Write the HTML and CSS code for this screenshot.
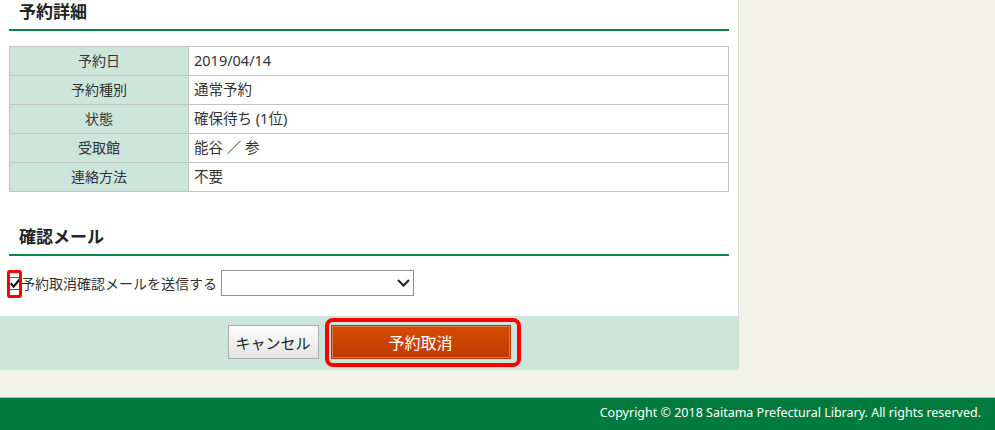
FILE: index.html
```html
<!DOCTYPE html>
<html lang="ja">
<head>
<meta charset="utf-8">
<title>予約詳細</title>
<link rel="stylesheet" href="styles.css">
</head>
<body>
<div class="main">
  <section class="sec">
    <h2 class="sec-title">予約詳細</h2>
    <table class="detail">
      <tr><th>予約日</th><td>2019/04/14</td></tr>
      <tr><th>予約種別</th><td>通常予約</td></tr>
      <tr><th>状態</th><td>確保待ち (1位)</td></tr>
      <tr><th>受取館</th><td>能谷 ／ 参</td></tr>
      <tr><th>連絡方法</th><td>不要</td></tr>
    </table>
  </section>
  <section class="sec sec-mail">
    <h2 class="sec-title">確認メール</h2>
    <div class="mail-row">
      <span class="check mark">
        <svg width="12" height="13" viewBox="0 0 12 13"><rect x="0.5" y="0.5" width="11" height="12" fill="#fff" stroke="#555"/><path d="M1.8 6.2 L4.6 9.6 L10.5 2.5" fill="none" stroke="#111" stroke-width="2.2"/></svg>
      </span>
      <span class="mail-label">予約取消確認メールを送信する</span>
      <span class="select">
        <svg width="13" height="8" viewBox="0 0 13 8"><path d="M1 1 L6.5 6.5 L12 1" fill="none" stroke="#222" stroke-width="2"/></svg>
      </span>
    </div>
  </section>
  <div class="actions">
    <button class="btn btn-cancel" type="button">キャンセル</button>
    <button class="btn btn-submit mark" type="button">予約取消</button>
  </div>
</div>
<footer class="footer">Copyright © 2018 Saitama Prefectural Library. All rights reserved.</footer>
</body>
</html>
```

FILE: styles.css
```css
* { box-sizing: border-box; }
html, body { margin: 0; padding: 0; }
body {
  background: #f3f2ea;
  font-family: "Noto Sans", "Noto Sans CJK JP", sans-serif;
  color: #333;
  font-size: 14px;
}
.main {
  width: 739px;
  background: #fff;
  border-right: 1px solid #dcdad2;
}
.sec { padding: 0 9px; }
.sec-title {
  margin: 0;
  height: 31px;
  padding: 0 0 0 10px;
  font-size: 17px;
  line-height: 24px;
  font-weight: bold;
  color: #222;
  border-bottom: 2px solid #0a8744;
}
.detail {
  margin-top: 15px;
  width: 720px;
  border-collapse: collapse;
}
.detail th, .detail td {
  border: 1px solid #c4c4c4;
  height: 29px;
  padding: 0 5px 2px;
  font-weight: normal;
  line-height: 25px;
}
.detail th {
  width: 179px;
  background: #cde6db;
  text-align: center;
}
.detail td {
  text-align: left;
  font-size: 14.5px;
}
.sec-mail { padding-top: 33px; }
.mail-row {
  display: flex;
  align-items: center;
  height: 26px;
  margin-top: 14px;
}
.check {
  display: flex;
  width: 12px;
  height: 13px;
  margin-left: 0;
}
.check.mark { position: relative; }
.check.mark::after {
  content: "";
  position: absolute;
  left: -2px; right: -1px; top: -7px; bottom: -8px;
  border: 3.5px solid #ff0000;
  border-radius: 3px;
}
.mail-label { margin-left: 0; }
.select {
  margin-left: 4px;
  width: 193px;
  height: 26px;
  border: 1px solid #8f8f8f;
  background: #fff;
  display: flex;
  align-items: center;
  justify-content: flex-end;
  padding-right: 3px;
}
.actions {
  margin-top: 20px;
  height: 54px;
  background: #cde6db;
  display: flex;
  justify-content: center;
  align-items: flex-start;
  gap: 12px;
  padding-top: 9px;
}
.btn {
  height: 34px;
  font-family: "Noto Sans CJK JP", sans-serif;
  cursor: pointer;
}
.btn-cancel {
  width: 91px;
  font-size: 15px;
  color: #222;
  border: 1px solid #aaa;
  background: linear-gradient(#fdfdfd, #e4e4e4);
  padding: 0;
}
.btn-submit {
  width: 180px;
  font-size: 16px;
  color: #fff;
  border: 1px solid #b83600;
  box-shadow: inset 0 0 0 1px #e07a45;
  background: linear-gradient(#d44c02, #c23a00);
  position: relative;
  padding: 0;
}
.btn-submit::after {
  content: "";
  position: absolute;
  left: -7px; right: -11px; top: -8px; bottom: -9px;
  border: 4px solid #ff0000;
  border-radius: 8px;
}
.footer {
  margin-top: 27px;
  border-top: 1px solid #bcbcb4;
  background: #007a3d;
  color: #fff;
  height: 34px;
  line-height: 30px;
  font-size: 12.5px;
  text-align: right;
  padding-right: 14px;
}
```
